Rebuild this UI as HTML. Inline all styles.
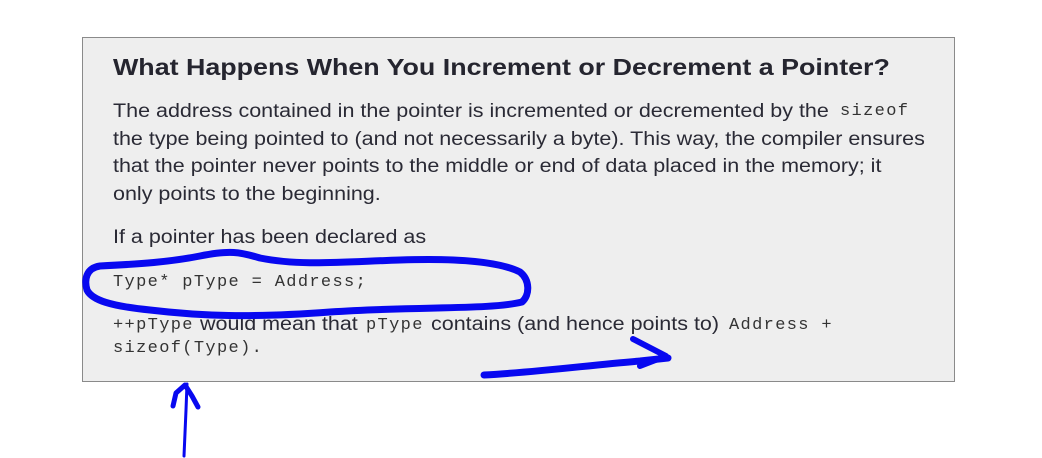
<!DOCTYPE html>
<html><head><style>
html,body{margin:0;padding:0;background:#fff;width:1042px;height:458px;overflow:hidden;position:relative}
.box{position:absolute;left:82px;top:37px;width:871px;height:343px;background:#eeeeee;border:1px solid #8a8a8a}
.t{position:absolute;font-family:"Liberation Sans",sans-serif;color:#2a2a35;white-space:nowrap;transform-origin:0 50%}
h1{position:absolute;left:113px;top:54px;margin:0;font:bold 23px "Liberation Sans",sans-serif;color:#25252f;white-space:nowrap;transform:scaleX(1.166);transform-origin:0 50%}
.b{font-size:19.3px;transform:scaleX(1.115)}
.m{position:absolute;font-family:"Liberation Mono",monospace;font-size:17px;letter-spacing:1.35px;color:#333;white-space:nowrap}
svg{position:absolute;left:0;top:0}
</style></head><body>
<div class="box"></div>
<h1>What Happens When You Increment or Decrement a Pointer?</h1>
<div class="t b" style="left:113px;top:101px">The address contained in the pointer is incremented or decremented by the</div>
<div class="m" style="left:840px;top:102px">sizeof</div>
<div class="t b" style="left:113px;top:129px">the type being pointed to (and not necessarily a byte). This way, the compiler ensures</div>
<div class="t b" style="left:113px;top:156px">that the pointer never points to the middle or end of data placed in the memory; it</div>
<div class="t b" style="left:113px;top:184px">only points to the beginning.</div>
<div class="t b" style="left:113px;top:227px">If a pointer has been declared as</div>
<div class="m" style="left:113px;top:273px">Type* pType = Address;</div>
<div class="m" style="left:113px;top:316px">++pType</div>
<div class="t b" style="left:200px;top:314px">would mean that</div>
<div class="m" style="left:366px;top:316px">pType</div>
<div class="t b" style="left:431px;top:314px">contains (and hence points to)</div>
<div class="m" style="left:729px;top:316px">Address +</div>
<div class="m" style="left:113px;top:339px">sizeof(Type).</div>
<svg width="1042" height="458" fill="none" stroke="#0808f0" stroke-linecap="round" stroke-linejoin="round">
<path d="M100 266 C140 264 170 262 200 256 C230 250 240 252 260 258 C300 266 340 262 400 260 C460 258 500 262 520 272 C530 280 530 295 522 302 C490 310 420 306 330 312 C250 318 200 316 150 310 C110 306 92 300 87 290 C84 280 86 268 100 266" stroke-width="7"/>
<path d="M484 375 C540 372 590 365 640 361 L668 358" stroke-width="7"/>
<path d="M633 339 L666 356 L640 366" stroke-width="6"/>
<path d="M184 456 L186 410 L187 384" stroke-width="3"/>
<path d="M173 406 L176 393 L185 385 L192 396 L198 407" stroke-width="5"/>
</svg>
</body></html>
